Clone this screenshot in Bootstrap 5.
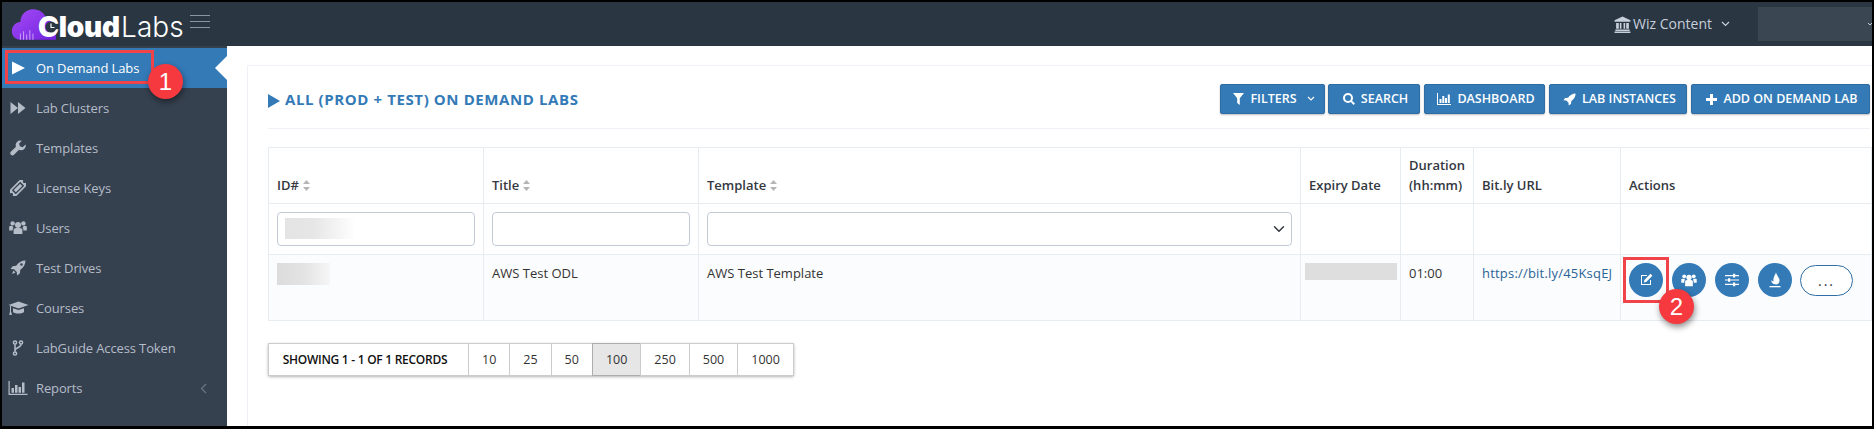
<!DOCTYPE html>
<html lang="en">
<head>
<meta charset="utf-8">
<title>On Demand Labs</title>
<link href="https://cdn.jsdelivr.net/npm/bootstrap@5.3.0/dist/css/bootstrap.min.css" rel="stylesheet">
<style>
html,body{height:429px;overflow:hidden;background:#fff}
body{font-family:"Open Sans","Noto Sans",sans-serif;font-size:13px;line-height:20px;color:#333}
.frame{height:429px;border:solid #000;border-width:2px 2px 3px 2px;overflow:hidden;display:flex;flex-direction:column}
.topbar{height:44px;background:#2b3643;flex:none}
.logo-cloud{width:46px;height:36px;margin-left:9px;margin-top:-3px;flex:none}
.logo-text{font-family:Inter,"Liberation Sans",sans-serif;font-size:28px;line-height:30px;color:#fff;margin-left:-19px;margin-top:6px;position:relative;white-space:nowrap;letter-spacing:-.2px}
.logo-text b{font-weight:900}
.logo-text i{font-style:normal;font-weight:300;margin-left:1px;letter-spacing:.1px}
.logo-clock{position:absolute;left:7px;top:9px;width:12px;height:12px}
.burger{width:20px;margin-left:6px;margin-top:-6px}
.burger span{display:block;height:1px;background:#8a95a3;margin-bottom:5px}
.org{color:#c6cfda;font-size:14px;margin-right:28px}
.org svg{margin-right:2px}
.org .chev{margin:0 0 0 9px}
.userblock{width:114px;height:34px;background:#3b4653;display:flex;align-items:center;justify-content:flex-end}
.side{width:225px;background:#364150;flex:none;padding-top:2px}
.side .nav-link{height:40px;padding:0 0 0 6px;color:#b4bcc8;font-size:13px;letter-spacing:-.12px;display:flex;align-items:center;position:relative}
.side .nav-link.on{background:#337ab7;color:#fff}
.side .ico{width:28px;flex:none;display:flex}
.side .ico svg{fill:#b4bcc8;margin-left:2px}
.side .on .ico svg{fill:#fff}
.notch{position:absolute;right:0;top:8px;border-style:solid;border-width:12px 12px 12px 0;border-color:transparent #fff transparent transparent}
.mark-box{position:absolute;border:3px solid #f0444a;pointer-events:none}
.mark-box.one{left:3px;top:2px;width:149px;height:34px}
.mark-box.two{left:-6px;top:-6px;width:46px;height:46px}
.mark-dot{position:absolute;width:35px;height:35px;border-radius:50%;background:#f5393f;color:#fff;font-family:"Liberation Sans",sans-serif;font-size:24px;line-height:35px;text-align:center;box-shadow:1px 3px 6px rgba(0,0,0,.45);z-index:3;letter-spacing:0}
.mark-dot.one{left:146px;top:16px}
.mark-dot.two{left:30px;top:26px}
.main{padding:19px 0 0 20px;overflow:hidden;min-width:0}
.sheet{border:1px solid #eef1f5;border-right:0;padding:0 2px 0 20px;height:400px;width:1625px}
.headrow{height:63px;border-bottom:1px solid #eef1f5;padding-top:18px}
.ttl{font-size:15px;font-weight:700;color:#337ab7;line-height:30px;margin:0;letter-spacing:.6px}
.ttl svg{margin-right:5px}
.tbtn{height:30px;background:#337ab7;border:1px solid #2e6da4;color:#fff;font-size:12.5px;font-weight:600;padding:0 0 0 3px;border-radius:2px;display:flex;align-items:center;justify-content:center;gap:6px;box-shadow:0 1px 2px rgba(0,0,0,.25);white-space:nowrap}
.tbtn svg{fill:#fff}
.w-a{width:105px;margin-right:3px}.w-b{width:92px;margin-right:4px}.w-c{width:121px;margin-right:4px}.w-d{width:138px;margin-right:4px}.w-e{width:179px}
.grid{table-layout:fixed;width:1603px;margin:18px 0 0;--bs-table-border-color:#e7ecf1;--bs-table-color:#333;border-color:#e7ecf1}
.grid th,.grid td{padding:8px;font-size:13px;line-height:20px}
.grid th{font-weight:600;vertical-align:bottom;color:#34383f;padding-top:7px}
.grid .fltr td{padding:8px;height:51px}
.grid .datarow td{background:#fbfcfd;--bs-table-bg:#fbfcfd;height:66px}
.c1,.c2{width:215px}.c3{width:602px}.c4{width:100px}.c5{width:73px}.c6{width:147px}.c7{width:251px}
.srt{display:inline-block;width:7px;height:11px;margin-left:4px;fill:#b5b5b5;vertical-align:-1px}
.grid .form-control,.grid .form-select{height:34px;border:1px solid #c2cad8;border-radius:4px;padding:0 8px;font-size:13px;background-color:#fff}
.grid .form-select{background-position:right 4px center}
.blur-wrap{position:relative}
.blur-a{position:absolute;left:8px;top:6px;width:71px;height:21px;background:linear-gradient(90deg,#e4e4e4,#e6e6e6 40%,#fff)}
.blur-b{width:53px;height:22px;background:linear-gradient(90deg,#dcdcdc,#e3e3e3 50%,#f6f6f6)}
.blur-c{width:92px;height:17px;margin-left:-4px;background:#dedede}
.bitly{color:#2a6496;text-decoration:none;white-space:nowrap;letter-spacing:.2px}
.acts{gap:9px}
.rbtn{width:34px;height:34px;border-radius:50%;background:#337ab7;border:0;padding:0;display:flex;align-items:center;justify-content:center;flex:none}
.rbtn svg{fill:#fff}
.pillb{width:53px;height:31px;margin-top:2px;border-radius:16px;border:1.5px solid #2f6ea5;background:#fff;color:#333;padding:0;font-size:14px;line-height:24px;letter-spacing:2px;flex:none;margin-left:-1px}
.pager{margin-top:22px;box-shadow:0 1px 3px rgba(0,0,0,.3);border-radius:2px}
.pager .btn{height:33px;padding:0 13px;border:1px solid #ccc;background:#fff;color:#333;font-size:12.5px;line-height:31px;border-radius:0}
.pager .btn.lead-cell{width:201px;padding:0 7px 0 0;font-size:12px;letter-spacing:-.27px;font-weight:600;color:#111;text-align:center}
.pager .btn.act{background:#e6e6e6;border-color:#adadad}
</style>
</head>
<body>
<div class="frame">
  <header class="topbar d-flex align-items-center">
    <svg class="logo-cloud" viewBox="0 0 44 34"><defs><linearGradient id="g" x1="0" y1="0" x2="1" y2="1"><stop offset="0" stop-color="#a24bf5"/><stop offset="1" stop-color="#7422e0"/></linearGradient></defs><path fill="url(#g)" d="M9 33C3 33 0 28 1 23 2 18 6 16 9 16 9 8 16 3 23 4 30 5 33 9 34 14 40 15 43 19 43 24L43 33Z"/><path stroke="#c79bf7" stroke-width="1" fill="none" d="M9 33V27M12 33V25M15 33V28M18 33V24M21 33V27"/></svg>
    <div class="logo-text"><b>Cloud</b><i>Labs</i><svg class="logo-clock" viewBox="0 0 12 12"><circle cx="6" cy="6" r="5.5" fill="#2b3643"/><path d="M6 2.5V6.5H9.5" stroke="#fff" stroke-width="1.2" fill="none"/></svg></div>
    <div class="burger"><span></span><span></span><span class="mb-0"></span></div>
    <div class="org ms-auto d-flex align-items-center">
      <svg width="17" height="17" viewBox="0 0 16 16" fill="#c6cfda"><path d="M8 0.5 15.5 4V5.5H.5V4ZM2 6.5H4.5V12H2ZM5.5 6.5H7V12H5.5ZM9 6.5H10.5V12H9ZM11.5 6.5H14V12H11.5ZM1.3 12.8H14.7V14H1.3ZM.5 14.6H15.5V16H.5Z"/></svg>
      <span>Wiz Content</span>
      <svg class="chev" width="9" height="6" viewBox="0 0 9 6"><path d="M1 1 4.5 4.5 8 1" fill="none" stroke="#c6cfda" stroke-width="1.2"/></svg>
    </div>
    <div class="userblock"><svg width="4" height="4" viewBox="0 0 4 4"><path d="M0 1 2 3 4 1" fill="none" stroke="#c6cfda"/></svg></div>
  </header>
  <div class="d-flex flex-grow-1 overflow-hidden">
    <nav class="side">
      <div class="nav flex-column">
        <a class="nav-link on" href="#"><span class="ico"><svg width="16" height="16" viewBox="0 0 16 16"><path d="M2 1.5 15 8 2 14.5Z"/></svg></span>On Demand Labs<span class="notch"></span><span class="mark-box one"></span><span class="mark-dot one">1</span></a>
        <a class="nav-link" href="#"><span class="ico"><svg width="16" height="16" viewBox="0 0 16 16"><path d="M.5 2 8 8 .5 14ZM8 2 15.5 8 8 14Z"/></svg></span>Lab Clusters</a>
        <a class="nav-link" href="#"><span class="ico"><svg width="16" height="16" viewBox="0 0 16 16"><path d="M15.6 4.4 12.6 7.2 9.9 6.3 9.1 3.6 11.8.8A4.6 4.6 0 0 0 6 6.8L1 11.6A2 2 0 0 0 4 14.7L9 9.7A4.6 4.6 0 0 0 15.6 4.4Z"/></svg></span>Templates</a>
        <a class="nav-link" href="#"><span class="ico"><svg width="16" height="16" viewBox="0 0 16 16"><g transform="rotate(-45 8 8)"><path fill-rule="evenodd" d="M-1 3.5H17V6.6A1.4 1.4 0 0 0 17 9.4V12.5H-1V9.4A1.4 1.4 0 0 0-1 6.6ZM2 5.2V10.8H14V5.2Z"/><path d="M3.5 6.5H12.5V9.5H3.5Z"/></g></svg></span>License Keys</a>
        <a class="nav-link" href="#"><span class="ico"><svg width="18" height="16" viewBox="0 0 18 16" style="margin-left:1px"><circle cx="9" cy="5" r="3"/><circle cx="3.6" cy="3.4" r="2.2"/><circle cx="14.4" cy="3.4" r="2.2"/><path d="M4.6 9.5C4.6 8.5 6 8 9 8S13.4 8.5 13.4 9.5V14H4.6ZM.2 6.5C.2 6 1.5 6 3.5 6 3.8 7 4.4 7.5 4.6 7.8 3.8 8.2 3.6 9 3.6 10.4H.2ZM17.8 6.5C17.8 6 16.5 6 14.5 6 14.2 7 13.6 7.5 13.4 7.8 14.2 8.2 14.4 9 14.4 10.4H17.8Z"/></svg></span>Users</a>
        <a class="nav-link" href="#"><span class="ico"><svg width="16" height="16" viewBox="0 0 16 16"><path fill-rule="evenodd" d="M15.5.5C11.5.5 8.5 2.5 6.2 5.7L2.6 6.2.5 9 4 9.2 6.8 12 7 15.5 9.8 13.4 10.3 9.8C13.5 7.5 15.5 4.5 15.5.5ZM11.5 3.2A1.3 1.3 0 1 1 11.5 5.8 1.3 1.3 0 1 1 11.5 3.2Z"/><path d="M3.5 10.5 5.5 12.5 2 14Z"/></svg></span>Test Drives</a>
        <a class="nav-link" href="#"><span class="ico"><svg width="21" height="16" viewBox="0 0 21 16" style="margin-left:0"><path d="M.5 5 10.5 1.5 20.5 5 10.5 8.5ZM5 8.2 10.5 10 16 8.2V11.5C16 13 13 13.5 10.5 13.5S5 13 5 11.5Z"/><path d="M2 6H3V12.5H3.6L3.8 15H1.4L1.6 12.5H2Z"/></svg></span>Courses</a>
        <a class="nav-link" href="#"><span class="ico"><svg width="16" height="16" viewBox="0 0 16 16" style="fill:none;stroke:#b4bcc8;stroke-width:1.5"><circle cx="5" cy="2.5" r="1.6"/><circle cx="11" cy="2.5" r="1.6"/><circle cx="5" cy="13.5" r="1.6"/><path d="M5 4.2V11.8M11 4.2C11 8 5 7.5 5 10.5"/></svg></span>LabGuide Access Token</a>
        <a class="nav-link" href="#"><span class="ico"><svg width="20" height="16" viewBox="0 0 20 16" style="margin-left:0"><path d="M.5 1H1.7V13.8H19.5V15H.5ZM3.5 8H6V12.8H3.5ZM7 5H9.5V12.8H7ZM10.5 7H13V12.8H10.5ZM14 2.5H16.5V12.8H14Z"/></svg></span>Reports<svg class="ms-auto" width="7" height="11" viewBox="0 0 7 11" style="margin-right:20px"><path d="M6 1 1.5 5.5 6 10" fill="none" stroke="#6b7685" stroke-width="1.2"/></svg></a>
      </div>
    </nav>
    <main class="main flex-grow-1">
      <section class="sheet">
        <div class="headrow d-flex justify-content-between">
          <h1 class="ttl"><svg width="12" height="14" viewBox="0 0 12 14" fill="#337ab7"><path d="M0 0 12 7 0 14Z"/></svg>ALL (PROD + TEST) ON DEMAND LABS</h1>
          <div class="d-flex">
            <button class="tbtn w-a"><svg width="11" height="12" viewBox="0 0 11 12"><path d="M0 0H11L6.8 5.2V12L4.2 10V5.2Z"/></svg>FILTERS <svg class="ms-1" width="8" height="6" viewBox="0 0 8 6"><path d="M1 1 4 4 7 1" fill="none" stroke="#fff" stroke-width="1.2"/></svg></button>
            <button class="tbtn w-b"><svg width="12" height="12" viewBox="0 0 12 12"><path d="M5 0A5 5 0 1 0 5 10 5 5 0 1 0 5 0ZM5 2A3 3 0 1 1 5 8 3 3 0 1 1 5 2Z" fill-rule="evenodd"/><path d="M7.5 8.8 8.8 7.5 12 10.6 10.6 12Z"/></svg>SEARCH</button>
            <button class="tbtn w-c"><svg width="14" height="12" viewBox="0 0 14 12"><path d="M0 0H1V11H14V12H0ZM2.5 6H4.5V10H2.5ZM5.3 3H7.3V10H5.3ZM8 5H10V10H8ZM10.8 1.5H12.8V10H10.8Z"/></svg>DASHBOARD</button>
            <button class="tbtn w-d"><svg width="13" height="13" viewBox="0 0 16 16"><path fill-rule="evenodd" d="M15.5.5C11.5.5 8.5 2.5 6.2 5.7L2.6 6.2.5 9 4 9.2 6.8 12 7 15.5 9.8 13.4 10.3 9.8C13.5 7.5 15.5 4.5 15.5.5Z"/></svg>LAB INSTANCES</button>
            <button class="tbtn w-e"><svg width="11" height="11" viewBox="0 0 11 11"><path d="M4 0H7V4H11V7H7V11H4V7H0V4H4Z"/></svg>ADD ON DEMAND LAB</button>
          </div>
        </div>
        <table class="table table-bordered grid">
          <colgroup><col class="c1"><col class="c2"><col class="c3"><col class="c4"><col class="c5"><col class="c6"><col class="c7"></colgroup>
          <thead>
            <tr>
              <th>ID#<svg class="srt" viewBox="0 0 7 11"><path d="M3.5 0 7 4H0ZM0 7H7L3.5 11Z"/></svg></th>
              <th>Title<svg class="srt" viewBox="0 0 7 11"><path d="M3.5 0 7 4H0ZM0 7H7L3.5 11Z"/></svg></th>
              <th>Template<svg class="srt" viewBox="0 0 7 11"><path d="M3.5 0 7 4H0ZM0 7H7L3.5 11Z"/></svg></th>
              <th>Expiry Date</th>
              <th>Duration (hh:mm)</th>
              <th>Bit.ly URL</th>
              <th>Actions</th>
            </tr>
          </thead>
          <tbody>
            <tr class="fltr">
              <td><div class="blur-wrap"><input class="form-control" type="text" aria-label="ID"><span class="blur-a"></span></div></td>
              <td><input class="form-control" type="text" aria-label="Title"></td>
              <td><select class="form-select" aria-label="Template"><option></option></select></td>
              <td></td><td></td><td></td><td></td>
            </tr>
            <tr class="datarow">
              <td><div class="blur-b"></div></td>
              <td>AWS Test ODL</td>
              <td>AWS Test Template</td>
              <td><div class="blur-c"></div></td>
              <td>01:00</td>
              <td><a class="bitly" href="#">https://bit.ly/45KsqEJ</a></td>
              <td>
                <div class="d-flex acts">
                  <div class="position-relative">
                    <button class="rbtn" aria-label="Edit"><svg width="14" height="14" viewBox="0 0 14 14"><path d="M2 2H8V3H3V11H11V7H12V12H2Z"/><path d="M11.5.8 13.4 2.7 7.2 8.9 4.8 9.5 5.4 7Z"/></svg></button>
                    <span class="mark-box two"></span><span class="mark-dot two">2</span>
                  </div>
                  <button class="rbtn" aria-label="Users"><svg width="16" height="14" viewBox="0 0 18 16"><circle cx="9" cy="5" r="3"/><circle cx="3.6" cy="3.8" r="2.2"/><circle cx="14.4" cy="3.8" r="2.2"/><path d="M4.6 9.5C4.6 8.5 6 8 9 8S13.4 8.5 13.4 9.5V15H4.6ZM.2 7C.2 6.5 1.5 6.5 3.5 6.5L4.6 8C3.8 8.3 3.6 9 3.6 11H.2ZM17.8 7C17.8 6.5 16.5 6.5 14.5 6.5L13.4 8C14.2 8.3 14.4 9 14.4 11H17.8Z"/></svg></button>
                  <button class="rbtn" aria-label="Settings"><svg width="14" height="14" viewBox="0 0 14 14"><path d="M0 2H14V3.2H0ZM0 6.4H14V7.6H0ZM0 10.8H14V12H0ZM8 .8H10.2V4.4H8ZM3 5.2H5.2V8.8H3ZM8 9.6H10.2V13.2H8Z"/></svg></button>
                  <button class="rbtn" aria-label="Deploy"><svg width="14" height="16" viewBox="0 0 14 16"><path d="M8 .5C8.5 3.5 11.5 5.5 11.5 8.5 11.5 11 9.8 12.5 8 12.5 5 12.5 3 10.5 3.5 7.8 4 9 4.8 9.6 5.5 9.5 4.8 6 6.8 3.5 8 .5Z"/><path d="M1.5 14H12.5V15.3H1.5Z"/></svg></button>
                  <button class="pillb" aria-label="More">...</button>
                </div>
              </td>
            </tr>
          </tbody>
        </table>
        <div class="btn-group pager" role="group">
          <button class="btn lead-cell">SHOWING 1 - 1 OF 1 RECORDS</button>
          <button class="btn">10</button><button class="btn">25</button><button class="btn">50</button><button class="btn act">100</button><button class="btn">250</button><button class="btn">500</button><button class="btn">1000</button>
        </div>
      </section>
    </main>
  </div>
</div>
<script src="https://cdn.jsdelivr.net/npm/bootstrap@5.3.0/dist/js/bootstrap.bundle.min.js"></script>
</body>
</html>
